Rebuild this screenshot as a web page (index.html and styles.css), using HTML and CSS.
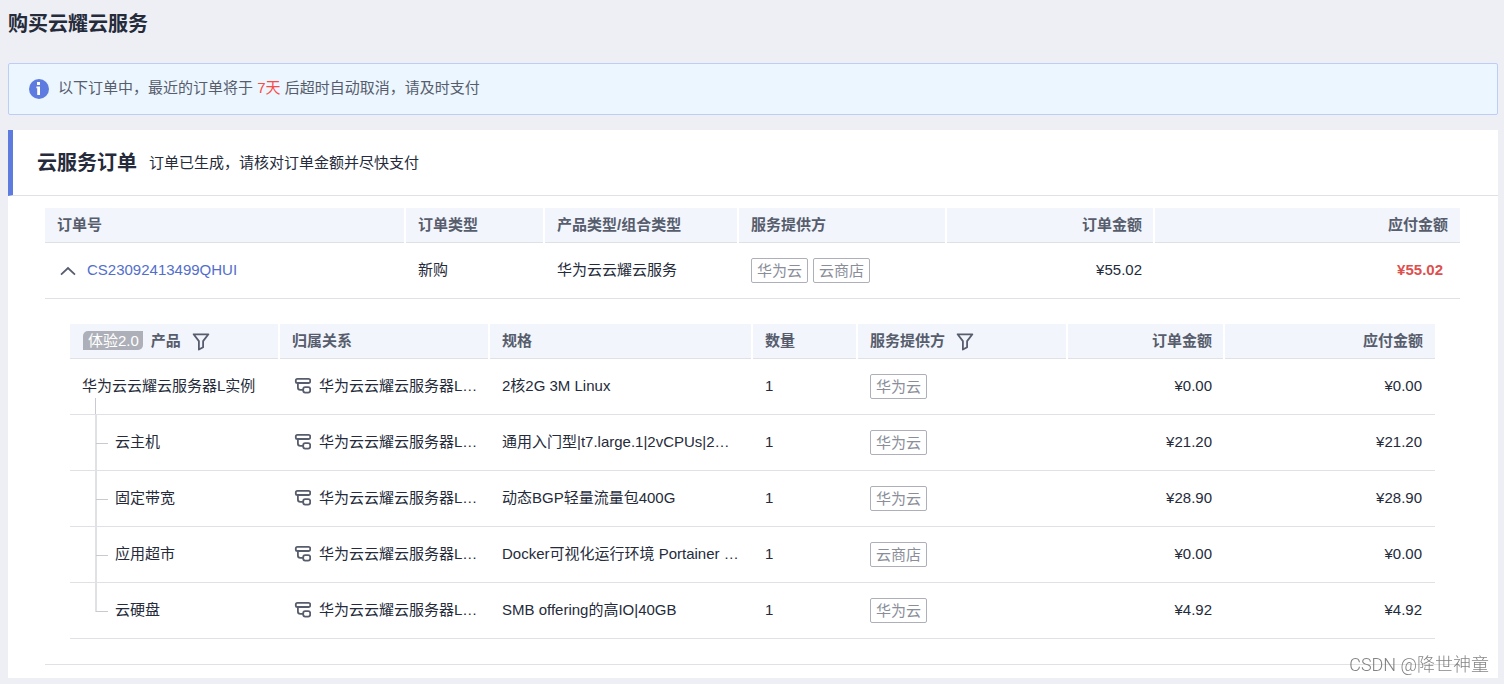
FILE: index.html
```html
<!DOCTYPE html>
<html lang="zh-CN">
<head>
<meta charset="utf-8">
<meta name="viewport" content="width=device-width, initial-scale=1">
<title>购买云耀云服务</title>
<link rel="stylesheet" href="styles.css">
</head>
<body>
<svg class="sprite" width="0" height="0" aria-hidden="true">
  <symbol id="icon-filter" viewBox="0 0 18 18">
    <path d="M1.6 1.3h14.8l-5.3 6.8v6.1l-4.2 2.3V8.1z" fill="none" stroke="currentColor" stroke-width="1.8" stroke-linejoin="round"/>
  </symbol>
  <symbol id="icon-relation" viewBox="0 0 18 18">
    <rect x="2.8" y="1.8" width="14.4" height="4.2" rx="1.6" fill="none" stroke="currentColor" stroke-width="1.8"/>
    <path d="M4.9 6v4.6q0 2.3 2.3 2.3h3" fill="none" stroke="currentColor" stroke-width="1.8"/>
    <rect x="10.2" y="10.2" width="7" height="5.4" rx="2" fill="none" stroke="currentColor" stroke-width="1.8"/>
  </symbol>
</svg>

<main class="page">
  <h1 class="page-title">购买云耀云服务</h1>

  <div class="notice" role="status">
    <svg class="notice-icon" viewBox="0 0 20 20" aria-hidden="true">
      <circle cx="10" cy="10" r="10" fill="#5e7ce0"/>
      <rect x="8" y="3" width="3" height="3" fill="#fff"/>
      <path d="M7.4 7.6H11V16H8.2V9.2h-.8z" fill="#fff"/>
    </svg>
    <p class="notice-text">以下订单中，最近的订单将于 <span class="notice-days">7天</span> 后超时自动取消，请及时支付</p>
  </div>

  <section class="card">
    <header class="card-header">
      <h2 class="card-title">云服务订单</h2>
      <p class="card-subtitle">订单已生成，请核对订单金额并尽快支付</p>
    </header>

    <div class="card-body">
      <table class="table orders">
        <colgroup>
          <col class="o-number"><col class="o-type"><col class="o-product"><col class="o-provider"><col class="o-amount"><col class="o-payable">
        </colgroup>
        <thead>
          <tr>
            <th scope="col">订单号</th>
            <th scope="col">订单类型</th>
            <th scope="col">产品类型/组合类型</th>
            <th scope="col">服务提供方</th>
            <th scope="col" class="num">订单金额</th>
            <th scope="col" class="num">应付金额</th>
          </tr>
        </thead>
        <tbody>
          <tr>
            <td>
              <div class="order-id">
                <button class="icon-button" type="button" aria-label="收起" aria-expanded="true">
                  <svg class="chevron" viewBox="0 0 18 18" aria-hidden="true"><path d="M2 13.6L9 7l7 6.6" fill="none" stroke="currentColor" stroke-width="1.8"/></svg>
                </button>
                <a class="order-link" href="#">CS23092413499QHUI</a>
              </div>
            </td>
            <td>新购</td>
            <td>华为云云耀云服务</td>
            <td class="tag-cell"><div class="tags"><span class="tag">华为云</span><span class="tag">云商店</span></div></td>
            <td class="num">¥55.02</td>
            <td class="num total">¥55.02</td>
          </tr>
          <tr>
            <td class="detail" colspan="6">
              <table class="table items">
                <colgroup>
                  <col class="i-product"><col class="i-relation"><col class="i-spec"><col class="i-count"><col class="i-provider"><col class="i-amount"><col class="i-payable">
                </colgroup>
                <thead>
                  <tr>
                    <th scope="col">
                      <div class="head-cell">
                        <span class="badge">体验2.0</span><span class="head-label">产品</span>
                        <button class="icon-button" type="button" aria-label="筛选产品"><svg class="icon" aria-hidden="true"><use href="#icon-filter"/></svg></button>
                      </div>
                    </th>
                    <th scope="col">归属关系</th>
                    <th scope="col">规格</th>
                    <th scope="col">数量</th>
                    <th scope="col">
                      <div class="head-cell">
                        <span class="head-label">服务提供方</span>
                        <button class="icon-button" type="button" aria-label="筛选服务提供方"><svg class="icon" aria-hidden="true"><use href="#icon-filter"/></svg></button>
                      </div>
                    </th>
                    <th scope="col" class="num">订单金额</th>
                    <th scope="col" class="num">应付金额</th>
                  </tr>
                </thead>
                <tbody>
                  <tr>
                    <td class="tree-root">华为云云耀云服务器L实例</td>
                    <td><div class="relation"><svg class="icon" aria-hidden="true"><use href="#icon-relation"/></svg><span>华为云云耀云服务器L…</span></div></td>
                    <td>2核2G 3M Linux</td>
                    <td>1</td>
                    <td class="tag-cell"><div class="tags"><span class="tag">华为云</span></div></td>
                    <td class="num">¥0.00</td>
                    <td class="num">¥0.00</td>
                  </tr>
                  <tr>
                    <td class="tree-child">云主机</td>
                    <td><div class="relation"><svg class="icon" aria-hidden="true"><use href="#icon-relation"/></svg><span>华为云云耀云服务器L…</span></div></td>
                    <td>通用入门型|t7.large.1|2vCPUs|2…</td>
                    <td>1</td>
                    <td class="tag-cell"><div class="tags"><span class="tag">华为云</span></div></td>
                    <td class="num">¥21.20</td>
                    <td class="num">¥21.20</td>
                  </tr>
                  <tr>
                    <td class="tree-child">固定带宽</td>
                    <td><div class="relation"><svg class="icon" aria-hidden="true"><use href="#icon-relation"/></svg><span>华为云云耀云服务器L…</span></div></td>
                    <td>动态BGP轻量流量包400G</td>
                    <td>1</td>
                    <td class="tag-cell"><div class="tags"><span class="tag">华为云</span></div></td>
                    <td class="num">¥28.90</td>
                    <td class="num">¥28.90</td>
                  </tr>
                  <tr>
                    <td class="tree-child">应用超市</td>
                    <td><div class="relation"><svg class="icon" aria-hidden="true"><use href="#icon-relation"/></svg><span>华为云云耀云服务器L…</span></div></td>
                    <td>Docker可视化运行环境 Portainer …</td>
                    <td>1</td>
                    <td class="tag-cell"><div class="tags"><span class="tag">云商店</span></div></td>
                    <td class="num">¥0.00</td>
                    <td class="num">¥0.00</td>
                  </tr>
                  <tr>
                    <td class="tree-child tree-last">云硬盘</td>
                    <td><div class="relation"><svg class="icon" aria-hidden="true"><use href="#icon-relation"/></svg><span>华为云云耀云服务器L…</span></div></td>
                    <td>SMB offering的高IO|40GB</td>
                    <td>1</td>
                    <td class="tag-cell"><div class="tags"><span class="tag">华为云</span></div></td>
                    <td class="num">¥4.92</td>
                    <td class="num">¥4.92</td>
                  </tr>
                </tbody>
              </table>
            </td>
          </tr>
        </tbody>
      </table>
    </div>
  </section>
</main>

<div class="watermark">CSDN @降世神童</div>
</body>
</html>
```

FILE: styles.css
```css
* {
  box-sizing: border-box;
}

body {
  margin: 0;
  background: #eeeff5;
  color: #252b3a;
  font-family: "Liberation Sans", "Noto Sans CJK SC", sans-serif;
  font-size: 15px;
  line-height: 24px;
}

h1, h2, p {
  margin: 0;
}

.sprite {
  position: absolute;
}

.page {
  padding: 9px 6px 6px 8px;
}

.page-title {
  font-size: 20px;
  line-height: 30px;
  font-weight: 700;
}

/* Notice bar */
.notice {
  display: flex;
  align-items: center;
  gap: 9px;
  margin: 24px 0 15px;
  padding: 12px 20px 14px;
  border: 1px solid #beccfa;
  border-radius: 2px;
  background: #ebf6ff;
  color: #575d6c;
}

.notice-icon {
  width: 20px;
  height: 20px;
  margin-top: 2px;
}

.notice-days {
  color: #fa4b46;
}

/* Order card */
.card {
  background: #fff;
}

.card-header {
  display: flex;
  align-items: center;
  gap: 12px;
  padding: 18px 24px 17px;
  border-left: 5px solid #5e7ce0;
  border-bottom: 1px solid #dfe1e6;
}

.card-title {
  font-size: 20px;
  line-height: 30px;
  font-weight: 700;
}

.card-body {
  padding: 12px 38px 13px 37px;
}

/* Tables */
.table {
  width: 100%;
  table-layout: fixed;
  border-collapse: separate;
  border-spacing: 0;
}

.table th {
  height: 35px;
  padding: 0 11px 2px 12px;
  border-right: 2px solid #fff;
  background: #f2f5fc;
  box-shadow: inset 0 -1px #dfe1e6;
  color: #575d6c;
  font-weight: 700;
  text-align: left;
  white-space: nowrap;
}

.table th:last-child {
  padding-right: 12px;
  border-right: 0;
}

.table td {
  height: 56px;
  padding: 0 12px 2px;
  border-bottom: 1px solid #dfe1e6;
  white-space: nowrap;
}

.table .tag-cell {
  padding-bottom: 0;
}

.table .num {
  text-align: right;
}

.table td.num {
  padding-right: 13px;
}

.table td.total {
  padding-right: 17px;
  color: #de504e;
  font-weight: 700;
}

.table .detail {
  padding: 25px;
}

.o-number { width: 361px; }
.o-type { width: 139px; }
.o-product { width: 194px; }
.o-provider { width: 208px; }
.o-amount { width: 208px; }
.o-payable { width: 305px; }

.i-product { width: 210px; }
.i-relation { width: 210px; }
.i-spec { width: 263px; }
.i-count { width: 105px; }
.i-provider { width: 210px; }
.i-amount { width: 157px; }
.i-payable { width: 210px; }

/* Cell contents */
.order-id {
  display: flex;
  align-items: center;
  gap: 10px;
  padding-left: 2px;
}

.order-link {
  color: #526ecc;
  text-decoration: none;
}

.icon-button {
  display: flex;
  padding: 0;
  border: 0;
  background: none;
  color: #575d6c;
  cursor: pointer;
}

.icon,
.chevron {
  flex: none;
  width: 18px;
  height: 18px;
  color: #575d6c;
}

.head-cell {
  display: flex;
  align-items: center;
}

.head-cell .icon-button {
  margin: 2px 0 0 11px;
}

.badge {
  margin: 0 8px 0 1px;
  padding: 0 4px 0 5px;
  border-radius: 5px 0 5px 0;
  background: #adb0b8;
  color: #fff;
  font-weight: 400;
  line-height: 19px;
}

.relation {
  display: flex;
  align-items: center;
  gap: 8px;
  padding-left: 1px;
}

.tags {
  display: flex;
  gap: 5px;
}

.tag {
  padding: 0 5px;
  border: 1px solid #adb0b8;
  border-radius: 2px;
  color: #8a8e99;
  line-height: 23px;
}

/* Tree connector lines */
.items .tree-root {
  background: linear-gradient(#c8cacf, #c8cacf) 25px 100% / 1px 16px no-repeat;
}

.items .tree-child {
  padding-left: 45px;
  background:
    linear-gradient(#c8cacf, #c8cacf) 26px 28px / 12px 1px no-repeat,
    linear-gradient(#e0e1e4, #e0e1e4) 25px 0 / 2px 100% no-repeat;
}

.items .tree-last {
  background-size: 12px 1px, 2px 29px;
}

.watermark {
  position: fixed;
  right: 15px;
  bottom: 5px;
  color: rgba(90, 90, 90, 0.75);
  font-family: Roboto, "Noto Sans CJK SC", sans-serif;
  font-size: 18px;
  font-weight: 300;
  line-height: 28px;
}
```
